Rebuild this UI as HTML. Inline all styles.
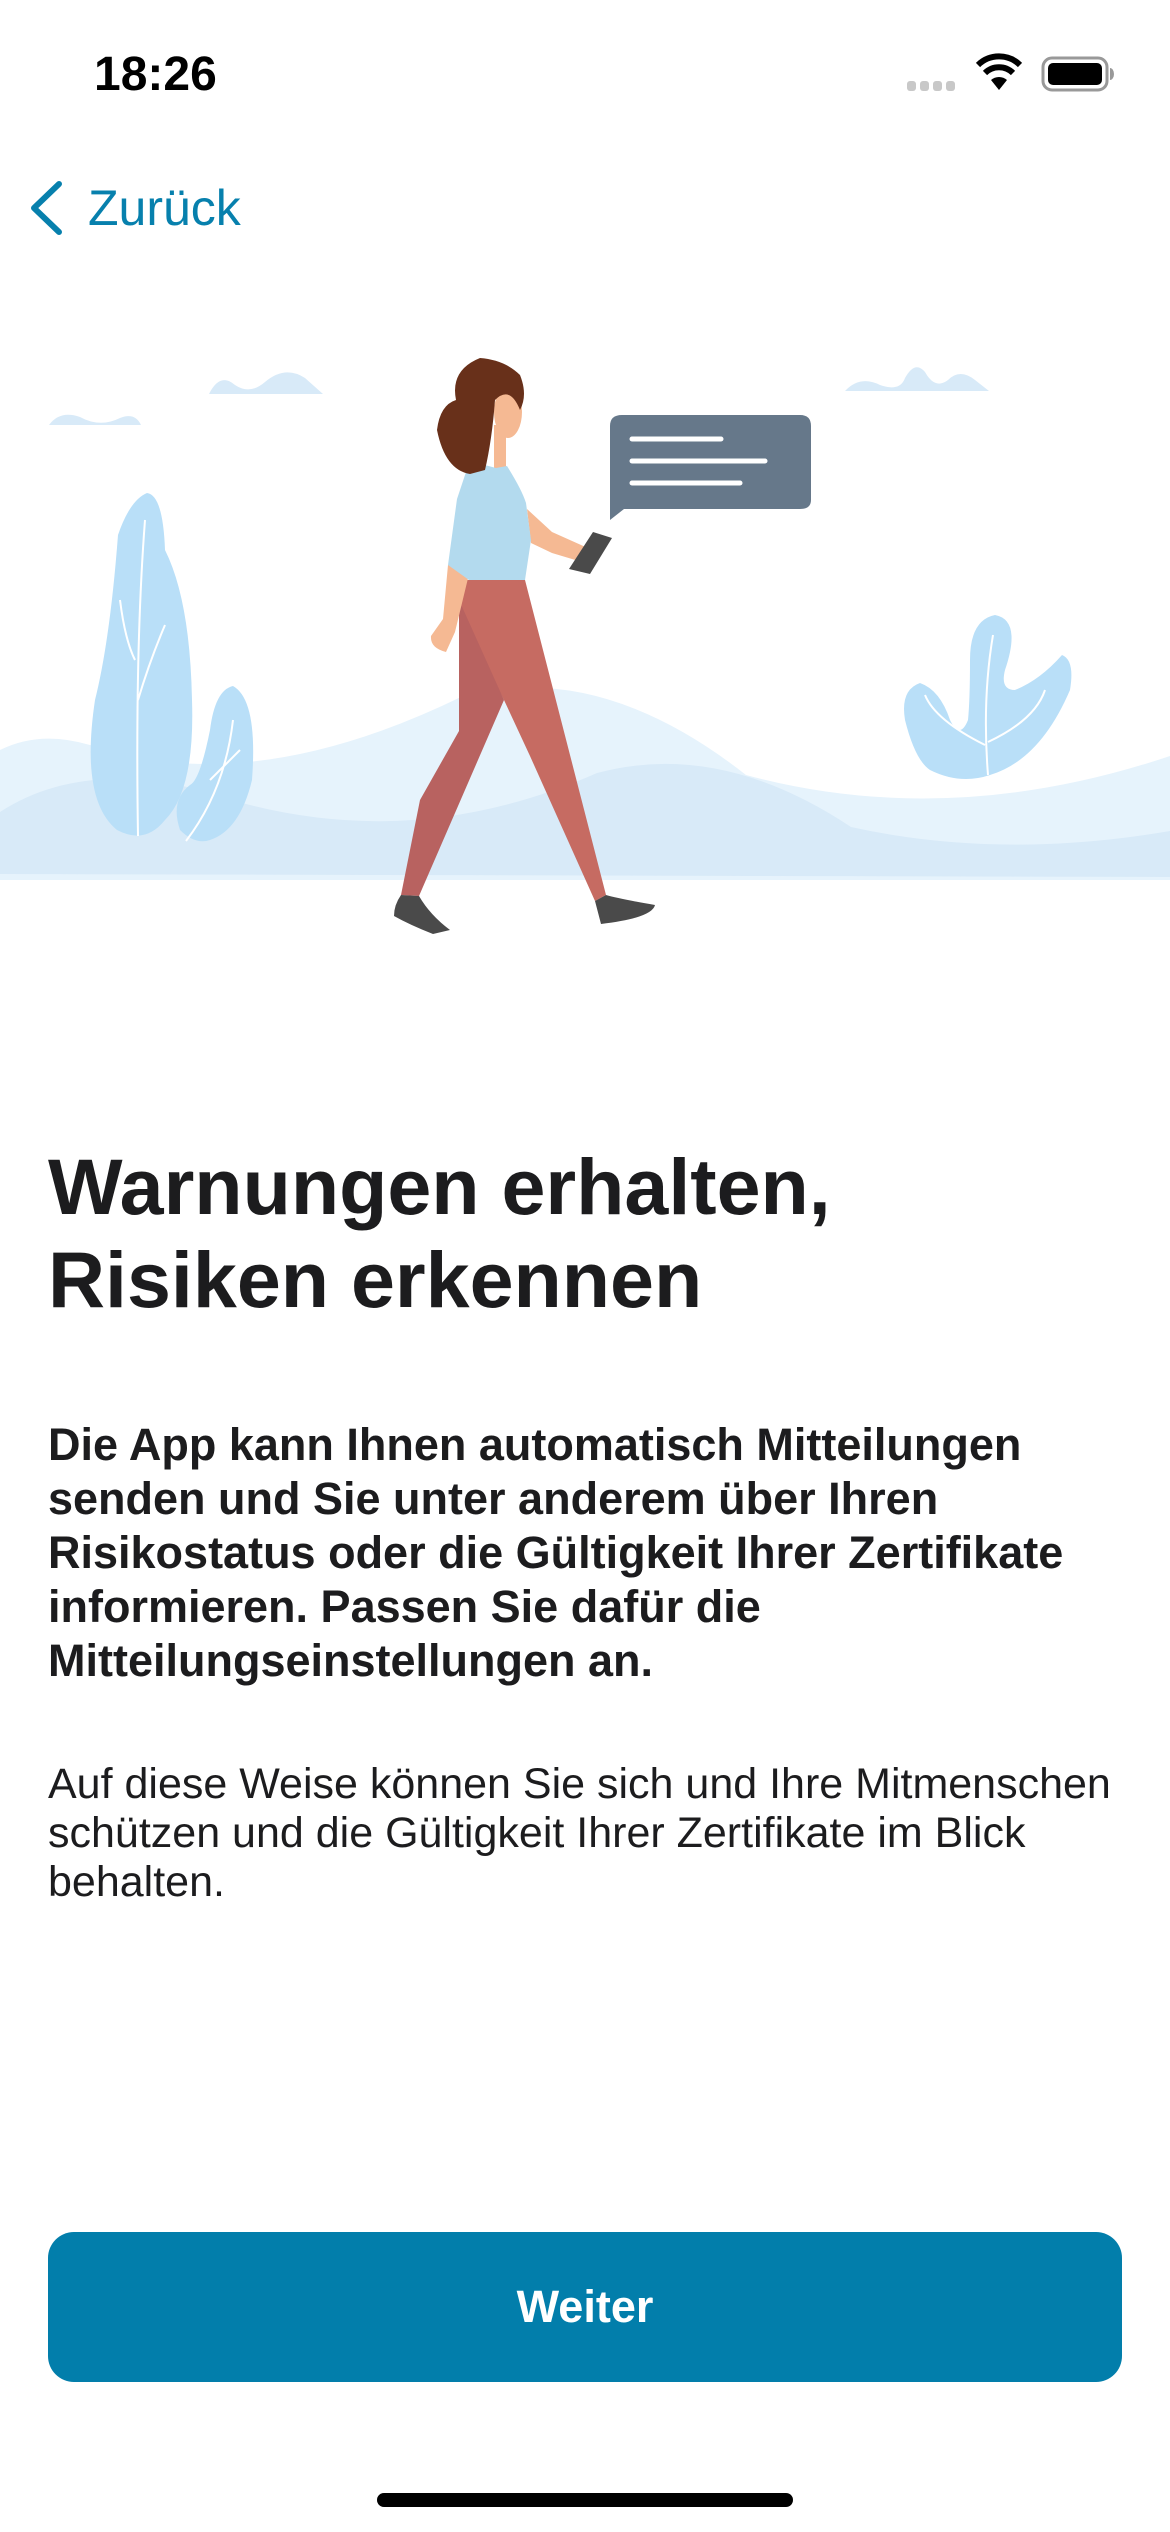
<!DOCTYPE html>
<html><head><meta charset="utf-8"><style>
*{margin:0;padding:0;box-sizing:border-box}
html,body{width:1170px;height:2532px;background:#fff;overflow:hidden;font-family:"Liberation Sans",sans-serif;color:#1c1c1e}
.abs{position:absolute;white-space:nowrap}
</style></head><body>
<div class="abs" style="left:94px;top:47px;font-size:48px;font-weight:bold;line-height:56px;color:#000">18:26</div>
<svg class="abs" style="left:0;top:0" width="1170" height="120">
 <g fill="#c8c8c8"><rect x="907" y="81" width="9" height="10" rx="3"/><rect x="920" y="81" width="9" height="10" rx="3"/><rect x="933" y="81" width="9" height="10" rx="3"/><rect x="946" y="81" width="9" height="10" rx="3"/></g>
 <path d="M999 90 L991 80 A12 12 0 0 1 1007 80 Z" fill="#000"/>
 <path d="M985 73 A20 20 0 0 1 1013 73" stroke="#000" stroke-width="6" fill="none"/>
 <path d="M978 65 A30 30 0 0 1 1020 65" stroke="#000" stroke-width="6" fill="none"/>
 <rect x="1043" y="58" width="64" height="32" rx="9" fill="none" stroke="#999" stroke-width="3"/>
 <rect x="1048" y="63" width="54" height="22" rx="5" fill="#000"/>
 <path d="M1110 68 v12 a4 6 0 0 0 0 -12z" fill="#999"/>
</svg>
<svg class="abs" style="left:26px;top:180px" width="40" height="56"><path d="M33 4 L8 28 L33 52" stroke="#0780ad" stroke-width="6" fill="none" stroke-linecap="round" stroke-linejoin="round"/></svg>
<div class="abs" style="left:88px;top:179px;font-size:50px;line-height:58px;color:#0780ad">Zurück</div>

<svg class="abs" style="left:0;top:0" width="1170" height="960">
 <path d="M0 750 Q40 730 90 745 Q250 800 463 696 Q600 660 746 775 Q950 830 1170 756 V880 H0Z" fill="#e6f3fc"/>
 <path d="M0 812 Q80 760 200 790 Q400 860 597 773 Q720 740 851 827 Q1000 860 1170 831 V877 L0 874Z" fill="#d8eaf8"/>
 <path d="M209 394 Q220 372 235 385 Q250 395 265 382 Q285 365 305 378 L323 394Z" fill="#d8eaf8"/>
 <path d="M49 425 Q60 410 80 417 Q100 428 120 418 Q135 412 141 425Z" fill="#d8eaf8"/>
 <path d="M845 391 Q860 375 880 385 Q900 392 905 378 Q915 360 925 372 Q935 390 948 380 Q960 368 975 380 L989 391Z" fill="#d8eaf8"/>
 <path d="M147 493 Q130 500 118 535 Q110 640 95 700 Q80 800 117 830 Q145 845 165 820 Q195 790 192 700 Q190 600 165 550 Q163 495 147 493Z" fill="#b9dff8"/>
 <path d="M233 686 Q215 690 210 730 Q200 780 190 785 Q170 800 180 830 Q195 845 210 840 Q240 830 252 780 Q258 700 233 686Z" fill="#b9dff8"/>
 <path d="M145 520 Q135 650 138 836 M138 700 Q150 660 165 625 M120 600 Q125 640 135 660" stroke="#fff" stroke-width="2" fill="none"/>
 <path d="M233 720 Q225 790 186 841 M210 780 Q220 770 240 750" stroke="#fff" stroke-width="2" fill="none"/>
 <path d="M995 615 Q970 620 970 660 Q970 700 968 720 Q960 740 950 720 Q940 690 920 683 Q900 690 905 720 Q915 760 930 770 Q960 785 990 775 Q1040 760 1070 690 Q1075 660 1062 655 Q1040 680 1015 690 Q1000 690 1005 670 Q1022 620 995 615Z" fill="#b9dff8"/>
 <path d="M993 635 Q982 700 988 775 M988 742 Q1035 720 1045 690 M985 745 Q935 720 925 695" stroke="#fff" stroke-width="2" fill="none"/>
 <path d="M622 415 H800 Q811 415 811 426 V500 Q811 509 800 509 H624 L610 520 V426 Q610 415 622 415Z" fill="#66788a"/>
 <g stroke="#fff" stroke-width="5" stroke-linecap="round"><line x1="632" y1="439" x2="721" y2="439"/><line x1="632" y1="461" x2="765" y2="461"/><line x1="632" y1="483" x2="740" y2="483"/></g>
 <path d="M459 580 L469 580 L525 580 L606 895 L595 901 L530 756 L504 700 L459 609Z" fill="#c66b62"/>
 <path d="M459 600 L504 700 L419 896 L401 895 L420 800 L459 731Z" fill="#b86260"/>
 <path d="M401 895 L419 896 Q430 915 450 930 L433 934 Q410 925 394 916 Q394 905 401 895Z" fill="#4a4a4a"/>
 <path d="M606 895 Q620 899 655 905 Q652 918 601 924 L595 901Z" fill="#4a4a4a"/>
 <path d="M527 509 L552 532 L590 549 L592 565 L552 553 L531 543Z" fill="#f5b993"/>
 <path d="M448 565 L470 570 L455 632 L446 652 Q430 648 431 636 L443 619Z" fill="#f5b993"/>
 <path d="M593 532 L612 538 L590 574 L569 569Z" fill="#4a4a4a"/>
 <rect x="494" y="425" width="12" height="44" fill="#f5b993"/>
 <path d="M466 472 L481 464 L496 468 L507 466 Q522 490 526 503 L531 540 L525 580 L469 580 L448 565 L457 499Z" fill="#b3daee"/>
 <ellipse cx="508" cy="412" rx="14" ry="26" fill="#f5b993"/>
 <path d="M456 400 Q450 370 480 358 Q505 360 520 375 Q528 395 520 410 Q510 385 495 400 Q492 440 485 470 L470 474 Q445 470 437 430 Q440 405 456 400Z" fill="#68301a"/>
</svg>

<div class="abs" style="left:48px;top:1140px;font-size:79px;font-weight:bold;line-height:93px;color:#1c1c1e">Warnungen erhalten,<br>Risiken erkennen</div>
<div class="abs" style="left:48px;top:1418px;font-size:45px;font-weight:bold;line-height:54px">Die App kann Ihnen automatisch Mitteilungen<br>senden und Sie unter anderem über Ihren<br>Risikostatus oder die Gültigkeit Ihrer Zertifikate<br>informieren. Passen Sie dafür die<br>Mitteilungseinstellungen an.</div>
<div class="abs" style="left:48px;top:1760px;font-size:43px;line-height:49px">Auf diese Weise können Sie sich und Ihre Mitmenschen<br>schützen und die Gültigkeit Ihrer Zertifikate im Blick<br>behalten.</div>
<div class="abs" style="left:48px;top:2232px;width:1074px;height:150px;border-radius:26px;background:#027eab;color:#fff;font-size:45px;font-weight:bold;line-height:150px;text-align:center">Weiter</div>
<div class="abs" style="left:377px;top:2493px;width:416px;height:14px;border-radius:7px;background:#000"></div>
</body></html>
